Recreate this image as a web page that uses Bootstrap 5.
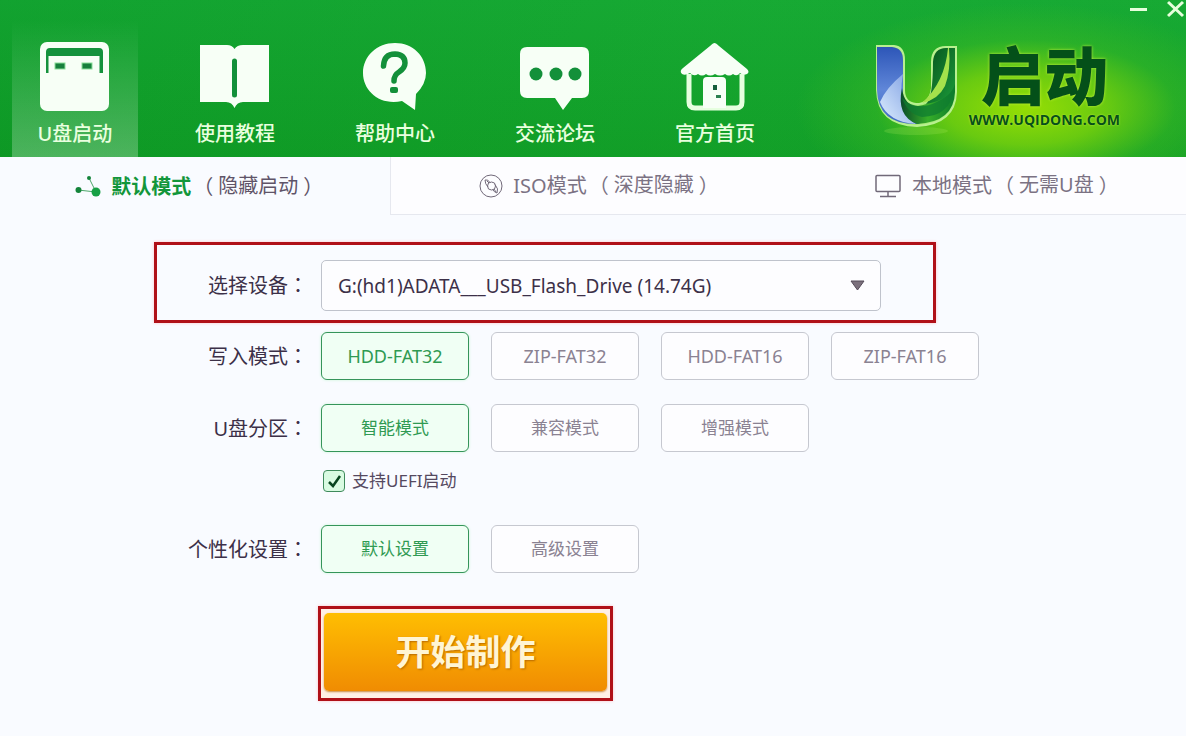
<!DOCTYPE html>
<html lang="zh-CN">
<head>
<meta charset="utf-8">
<meta name="viewport" content="width=device-width, initial-scale=1">
<title>U启动</title>
<link href="https://cdn.jsdelivr.net/npm/bootstrap@5.3.0/dist/css/bootstrap.min.css" rel="stylesheet">
<style>
  body { background: #f9fbff; color: #3c3048; font-family: "Noto Sans", "Noto Sans CJK SC", sans-serif; font-size: 20px; line-height: 28px; }
  a { text-decoration: none; }
  .app-header {
    background:
      radial-gradient(ellipse 230px 105px at calc(100% - 160px) 108px, #96de04 0%, rgba(126, 212, 10, .8) 35%, rgba(70, 190, 30, .4) 65%, rgba(30, 170, 45, 0) 100%),
      linear-gradient(90deg, rgba(0, 120, 20, .1), rgba(60, 200, 60, .08) 65%),
      linear-gradient(#14a733, #0f9c26);
  }
  .win-bar { height: 20px; }
  .win-btn { background: none; border: 0; padding: 0; line-height: 0; }
  .main-nav { gap: 34px; padding-left: 12px; }
  .main-link { width: 126px; height: 137px; padding-top: 20px; color: #e9ffdf; font-weight: 500; }
  .main-link:hover { color: #fff; }
  .main-link.active { background: linear-gradient(rgba(255, 255, 255, 0), rgba(255, 255, 255, .26)); }
  .main-link svg { display: block; margin: 0 auto 8px; }
  .brand { padding: 20px 66px 0 0; gap: 3px; }
  .brand-name { color: #045019; font-family: "Noto Sans CJK SC", sans-serif; font-size: 64px; line-height: 64px; font-weight: 900; text-shadow: 0 0 3px #c4f23c; }
  .brand-url { color: #06501a; font-family: "Open Sans", sans-serif; font-size: 14px; line-height: 16px; font-weight: 700; text-shadow: 0 0 2px #c4f23c; }
  .mode-tab { height: 58px; flex: 1 1 0; padding-left: 18px; background: #fdfdff; border-bottom: 1px solid #e6e8ef; color: #7b7283; gap: 10px; }
  .mode-tab.active { flex: 0 0 33%; padding-left: 8px; background: none; border-right: 1px solid #e6e8ef; border-bottom: 0; color: #5f5468; }
  .mode-tab.active strong { color: #12963a; font-weight: 700; }
  .mode-note { display: inline-flex; gap: 5px; margin-left: 2px; }
  .wide-mark { font-family: "Noto Sans CJK TC", sans-serif; }
  .field-list { padding-left: 154px; }
  .field-row { display: grid; grid-template-columns: 154px 1fr; column-gap: 13px; align-items: center; }
  .field-label { text-align: right; }
  .marked { border: 3px solid #b01018; box-shadow: 0 0 3px #ffc4c8; }
  .marked.field-row { width: 782px; max-width: 100%; grid-template-columns: 151px 1fr; padding: 15px 52px 9px 0; }
  .device { height: 51px; border: 1px solid #bfc3cc; border-radius: 5px; background: #fdfdff; color: #3c3048; font-size: 19px; padding: 0 40px 0 16px; appearance: none; }
  .device-arrow { position: absolute; right: 16px; top: 20px; pointer-events: none; }
  .options { gap: 22px; }
  .opt { width: 148px; height: 48px; padding: 0; line-height: 46px; font-size: 17px; border: 1px solid #c6c8d0; border-radius: 6px; background: #fdfdff; color: #8a8292; }
  .opt-format { font-size: 18px; }
  .btn-check:checked + .opt { border-color: #35955a; background: #f0fff4; color: #2f9a52; box-shadow: 0 0 3px #c9f5d5; }
  .uefi { gap: 7px; padding-left: 2px; font-size: 17px; line-height: 22px; color: #55495f; }
  .uefi .tick { width: 22px; height: 22px; margin: 0; appearance: none; border: 1px solid #3f8a5c; border-radius: 4px; background: #d9fbe2; }
  .tick-mark { position: absolute; left: 4px; top: 4px; pointer-events: none; }
  .start-frame { width: 295px; margin-left: -3px; padding: 4px 3px 7px 3px; background: #fff0e6; }
  .start { height: 78px; border: 0; border-radius: 5px; background: linear-gradient(#ffbe02, #f08c02); color: #fff5d4; font-size: 35px; line-height: 78px; font-weight: 700; text-shadow: 1px 1px 2px #b86a00; box-shadow: 0 1px 2px #c88a40; }
</style>
</head>
<body>
<header class="app-header">
  <div class="win-bar d-flex justify-content-end align-items-start">
    <button class="win-btn" type="button" aria-label="最小化"><svg width="37" height="20"><path d="M0 9.500H17" stroke="#e6ffdc" stroke-width="3"/></svg></button>
    <button class="win-btn" type="button" aria-label="关闭"><svg width="19" height="20"><path d="M1 2L16 16M16 2L1 16" stroke="#e6ffdc" stroke-width="3"/></svg></button>
  </div>
  <div class="d-flex justify-content-between">
    <nav class="main-nav d-flex text-center">
      <a class="main-link active" href="#">
        <svg width="72" height="72" viewBox="0 0 72 72"><rect x="1" y="2" width="69" height="69" rx="7" fill="#f7fff6"/><path d="M7 33V12q0-4 4-4H60q4 0 4 4V33H60.500V16H9.500V33Z" fill="#14923c"/><rect x="16" y="23" width="10" height="6" fill="#17803c" stroke="#8adf98"/><rect x="43" y="23" width="10" height="6" fill="#17803c" stroke="#8adf98"/></svg>U盘启动</a>
      <a class="main-link" href="#">
        <svg width="72" height="72" viewBox="0 0 72 72"><path d="M1 5H28Q33 5 35.500 9Q38 5 44 5H70V62H44Q38 62 35.500 68Q33 62 27 62H1Z" fill="#f7fff6"/><path d="M35.500 21V55" stroke="#13903a" stroke-width="5" stroke-linecap="round"/></svg>使用教程</a>
      <a class="main-link" href="#">
        <svg width="72" height="72" viewBox="0 0 72 72"><path d="M36 3C54 3 67 16 67 33Q67 44 57 54L56 70L43 61C21 66 4 51 4 33C4 16 18 3 36 3Z" fill="#f7fff6"/><path d="M24.500 26Q25 14 36 14Q46 14.500 46 23Q46 28 40 32Q35 35 35 41" fill="none" stroke="#13903a" stroke-width="5.500" stroke-linecap="round"/><rect x="31" y="47" width="8" height="6" rx="2" fill="#13903a"/></svg>帮助中心</a>
      <a class="main-link" href="#">
        <svg width="72" height="72" viewBox="0 0 72 72"><path d="M8 7H63Q70 7 70 14V51Q70 58 63 58H53L44 70L36 58H8Q1 58 1 51V14Q1 7 8 7Z" fill="#f7fff6"/><g fill="#13903a"><circle cx="17" cy="34" r="6.500"/><circle cx="37" cy="34" r="6.500"/><circle cx="56" cy="34" r="6.500"/></g></svg>交流论坛</a>
      <a class="main-link" href="#">
        <svg width="72" height="72" viewBox="0 0 72 72"><path d="M35.500 3Q37 3 40 6L68 29Q71 32 68 34Q64 36 61 33Q58 37 54 34Q50 37 46 34Q41 37 36 34Q31 37 27 34Q23 37 19 34Q15 37 11 33Q6 36 3 34Q0 31 4 28L31 6Q34 3 35.500 3Z" fill="#f7fff6"/><path d="M10 34V62Q10 68 16 68H57Q63 68 63 62V34" fill="none" stroke="#e6ffdf" stroke-width="5"/><path d="M24 41Q24 37 28 37H43Q47 37 47 41V68H24Z" fill="#f7fff6"/><rect x="34" y="45" width="4" height="5" fill="#155f3c"/><rect x="37" y="55" width="5" height="3" fill="#2b8050"/></svg>官方首页</a>
    </nav>
    <div class="brand d-flex">
      <svg width="96" height="96" viewBox="0 0 96 96">
        <defs>
          <linearGradient id="blue" x1="0" y1="0" x2="0" y2="1"><stop offset="0" stop-color="#2d56b8"/><stop offset=".55" stop-color="#5f86d8"/><stop offset="1" stop-color="#3d68c4"/></linearGradient>
          <linearGradient id="pale" x1="0" y1="1" x2="1" y2="0"><stop offset="0" stop-color="#dff0ff"/><stop offset="1" stop-color="#7899e0"/></linearGradient>
          <linearGradient id="leaf" x1="0" y1="0" x2="1" y2="1"><stop offset="0" stop-color="#05501c"/><stop offset="1" stop-color="#1c9c3a"/></linearGradient>
          <linearGradient id="lime" x1="0" y1="0" x2="1" y2="0"><stop offset="0" stop-color="#0a4a2a"/><stop offset=".5" stop-color="#37ae28"/><stop offset="1" stop-color="#0d7c2c"/></linearGradient>
        </defs>
        <ellipse cx="46" cy="91" rx="32" ry="4" fill="#b4ee66" opacity=".2"/>
        <path d="M7 6H24Q34 7 34 20V50Q34 63 46 64Q60 64 62 48V22Q62 7 76 7H86V52Q85 84 47 86Q8 85 7 50Z" fill="#a9ec78" stroke="#b9f090" stroke-width="2"/>
        <path d="M7 7H22Q33 8 33 20V56Q33 72 50 84Q8 86 7 50Z" fill="url(#blue)"/>
        <path d="M33 34Q16 48 10 62Q18 82 46 84Q26 74 33 34Z" fill="url(#pale)"/>
        <path d="M32 48Q34 66 48 66Q66 64 72 44L85 38V52Q84 82 47 84Q26 76 32 48Z" fill="url(#lime)"/>
        <path d="M32 58Q52 78 84 50Q80 76 52 77Q38 74 32 58Z" fill="#0f7c30" opacity=".75"/>
        <path d="M63 22Q64 8 76 8H85V44Q80 60 56 64Q63 58 63 22Z" fill="url(#leaf)"/>
        <path d="M78 8Q75 42 52 63Q68 60 75 46Q81 30 79 8Z" fill="#a4e24c"/>
      </svg>
      <div class="d-flex flex-column text-center">
        <span class="brand-name">启动</span>
        <span class="brand-url mt-2">WWW.UQIDONG.COM</span>
      </div>
    </div>
  </div>
</header>
<nav class="d-flex">
  <a class="mode-tab active d-flex justify-content-center align-items-center" href="#">
    <svg width="26" height="22" viewBox="0 0 26 22"><path d="M3 15L21 17L14 3" fill="none" stroke="#4da66a"/><circle cx="3.500" cy="15" r="3" fill="#14843a"/><circle cx="14" cy="3" r="2" fill="#14843a"/><circle cx="21" cy="17" r="4.500" fill="#17a045"/></svg>
    <span><strong>默认模式</strong><span class="mode-note"><span class="wide-mark" lang="zh-TW">（</span>隐藏启动<span class="wide-mark" lang="zh-TW">）</span></span></span></a>
  <a class="mode-tab d-flex justify-content-center align-items-center" href="#">
    <svg width="24" height="24" viewBox="0 0 24 24" fill="none" stroke="#716979"><circle cx="12" cy="12" r="11"/><circle cx="12.500" cy="12" r="4"/><path d="M6 6Q6 10 9 13M6 6Q9 5 11 8.500M16 10.500Q20 15 18 19M18 19Q15 18 14 16M8 7L10 9M15 15L17 18"/></svg>
    <span>ISO模式<span class="mode-note"><span class="wide-mark" lang="zh-TW">（</span>深度隐藏<span class="wide-mark" lang="zh-TW">）</span></span></span></a>
  <a class="mode-tab d-flex justify-content-center align-items-center" href="#">
    <svg width="28" height="24" viewBox="0 0 28 24" fill="none" stroke="#716979" stroke-width="1.500"><rect x="2" y="1.500" width="24" height="16" rx="1"/><path d="M14 18V22M6 22.500H22"/></svg>
    <span>本地模式<span class="mode-note"><span class="wide-mark" lang="zh-TW">（</span>无需U盘<span class="wide-mark" lang="zh-TW">）</span></span></span></a>
</nav>
<main>
  <form class="field-list d-flex flex-column pb-4">
    <div class="field-row marked" style="margin-top:27px">
      <label class="field-label" for="device">选择设备<span class="wide-mark" lang="zh-TW">：</span></label>
      <div class="position-relative">
        <select class="device w-100" id="device"><option>G:(hd1)ADATA___USB_Flash_Drive (14.74G)</option></select>
        <svg class="device-arrow" width="15" height="11"><path d="M1 1H14L7.500 10Z" fill="#7b707c" stroke="#544a58"/></svg>
      </div>
    </div>
    <div class="field-row" style="margin-top:9px" role="radiogroup" aria-labelledby="l-write">
      <span class="field-label" id="l-write">写入模式<span class="wide-mark" lang="zh-TW">：</span></span>
      <div class="options d-flex">
        <input class="btn-check" type="radio" name="write" id="w1" checked><label class="btn opt opt-format" for="w1">HDD-FAT32</label>
        <input class="btn-check" type="radio" name="write" id="w2"><label class="btn opt opt-format" for="w2">ZIP-FAT32</label>
        <input class="btn-check" type="radio" name="write" id="w3"><label class="btn opt opt-format" for="w3">HDD-FAT16</label>
        <input class="btn-check" type="radio" name="write" id="w4"><label class="btn opt opt-format" for="w4">ZIP-FAT16</label>
      </div>
    </div>
    <div class="field-row mt-4" role="radiogroup" aria-labelledby="l-part">
      <span class="field-label" id="l-part">U盘分区<span class="wide-mark" lang="zh-TW">：</span></span>
      <div class="options d-flex">
        <input class="btn-check" type="radio" name="part" id="p1" checked><label class="btn opt" for="p1">智能模式</label>
        <input class="btn-check" type="radio" name="part" id="p2"><label class="btn opt" for="p2">兼容模式</label>
        <input class="btn-check" type="radio" name="part" id="p3"><label class="btn opt" for="p3">增强模式</label>
      </div>
    </div>
    <div class="field-row" style="margin-top:18px">
      <span></span>
      <div class="uefi d-flex align-items-center">
        <span class="position-relative d-flex"><input class="tick" type="checkbox" id="uefi" checked><svg class="tick-mark" width="15" height="14"><path d="M2 8L6 12L13 2" fill="none" stroke="#08451f" stroke-width="2.500"/></svg></span>
        <label for="uefi">支持UEFI启动</label>
      </div>
    </div>
    <div class="field-row" style="margin-top:33px" role="radiogroup" aria-labelledby="l-custom">
      <span class="field-label" id="l-custom">个性化设置<span class="wide-mark" lang="zh-TW">：</span></span>
      <div class="options d-flex">
        <input class="btn-check" type="radio" name="custom" id="c1" checked><label class="btn opt" for="c1">默认设置</label>
        <input class="btn-check" type="radio" name="custom" id="c2"><label class="btn opt" for="c2">高级设置</label>
      </div>
    </div>
    <div class="field-row" style="margin-top:33px">
      <span></span>
      <div class="marked start-frame"><button class="start w-100 d-block p-0" type="button">开始制作</button></div>
    </div>
  </form>
</main>
<script src="https://cdn.jsdelivr.net/npm/bootstrap@5.3.0/dist/js/bootstrap.bundle.min.js"></script>
</body>
</html>
